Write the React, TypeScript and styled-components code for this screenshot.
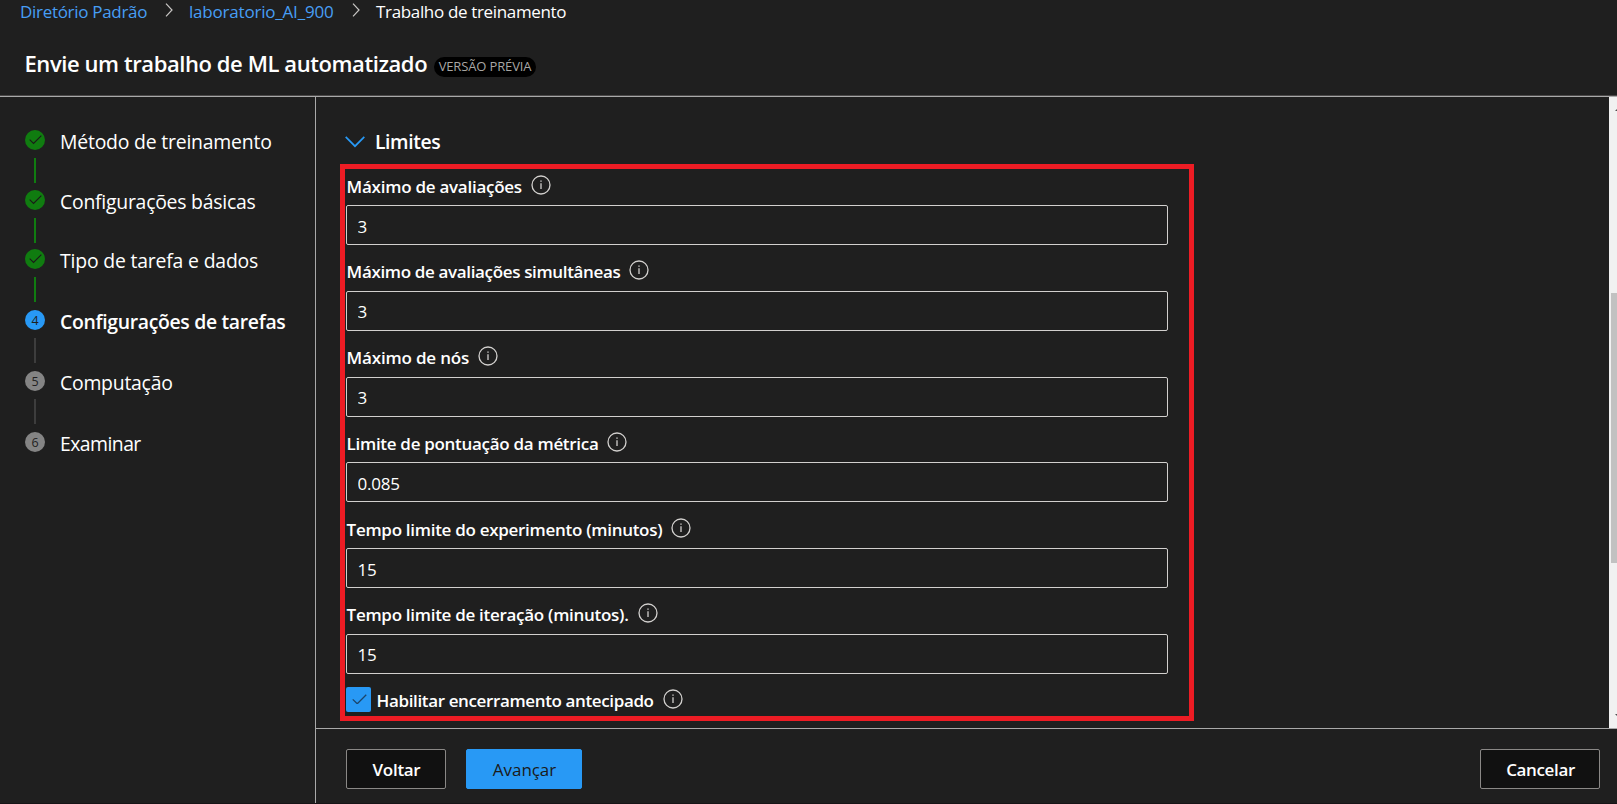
import React from "react";
import styled, { createGlobalStyle } from "styled-components";

const GlobalStyle = createGlobalStyle`
  *, *::before, *::after { box-sizing: border-box; }
  body {
    margin: 0;
    background: #1f1f1f;
    color: #ffffff;
    font-family: "Open Sans", "Noto Sans", sans-serif;
    overflow: hidden;
  }
`;

const Page = styled.div`
  display: flex;
  flex-direction: column;
  height: 100vh;
  border-bottom: 1px solid #171417;
`;

const Header = styled.header`
  flex: none;
  height: 97px;
  border-bottom: 1px solid #a9a9a9;
  box-shadow: inset 0 -1px 0 #4a4848;
`;

const Breadcrumb = styled.nav`
  display: flex;
  height: 22px;
  padding-left: 20px;
  font-size: 17px;
  line-height: 23px;
  white-space: nowrap;
`;

const Crumb = styled.span<{ $width: number; $tracking: number; $current?: boolean }>`
  width: ${(p) => p.$width}px;
  letter-spacing: ${(p) => p.$tracking}px;
  color: ${(p) => (p.$current ? "#ffffff" : "#479ef5")};
`;

const CrumbArrow = styled.svg`
  flex: none;
  width: 8px;
  height: 14px;
  margin: 3px 16px 0;
`;

const TitleRow = styled.div`
  display: flex;
  align-items: flex-start;
  margin-top: 26px;
  padding-left: 24.5px;
`;

const Title = styled.h1`
  width: 409px;
  margin: 0;
  font-size: 22px;
  font-weight: 600;
  line-height: 31px;
  letter-spacing: -0.42px;
  white-space: nowrap;
`;

const PreviewTag = styled.span`
  width: 102px;
  height: 20px;
  margin-top: 9px;
  padding-left: 1px;
  border-radius: 10px;
  background: #000000;
  color: #a8a6a4;
  font-size: 13px;
  line-height: 19px;
  letter-spacing: -0.14px;
  text-align: center;
  white-space: nowrap;
`;

const Body = styled.div`
  display: flex;
  flex: 1;
  min-height: 0;
`;

const Sidebar = styled.aside`
  flex: none;
  width: 316px;
  padding: 33px 0 0 25px;
  border-right: 1px solid #a9a9a9;
`;

const Step = styled.div<{ $height: number }>`
  display: flex;
  gap: 15px;
  height: ${(p) => p.$height}px;
`;

const StepRail = styled.div`
  display: flex;
  flex-direction: column;
  align-items: center;
  gap: 8px;
  width: 20px;
`;

type StepState = "done" | "current" | "pending";

const stepColors: Record<StepState, string> = {
  done: "#107c10",
  current: "#2899f5",
  pending: "#848484",
};

const StepBadge = styled.div<{ $state: StepState }>`
  display: flex;
  flex: none;
  align-items: center;
  justify-content: center;
  width: 20px;
  height: 20px;
  border-radius: 50%;
  background: ${(p) => stepColors[p.$state]};
  color: #1f1f1f;
  font-size: 12.5px;
  line-height: 20px;
`;

const StepNumber = styled.span`
  padding-top: 1px;
`;

const Connector = styled.div<{ $done: boolean }>`
  width: 2px;
  height: 25px;
  background: ${(p) => (p.$done ? "#107c10" : "#3d3d3d")};
`;

const StepLabel = styled.span<{ $active: boolean; $tracking: number }>`
  font-size: 19.4px;
  font-weight: ${(p) => (p.$active ? 600 : 400)};
  line-height: 24px;
  letter-spacing: ${(p) => p.$tracking}px;
  white-space: nowrap;
`;

const Main = styled.main`
  display: flex;
  flex: 1;
  flex-direction: column;
  min-width: 0;
`;

const ScrollArea = styled.div`
  display: flex;
  flex: none;
  height: 631px;
`;

const Content = styled.div`
  flex: 1;
  padding: 31px 0 0 24px;
`;

const SectionHeader = styled.div`
  display: flex;
  align-items: center;
  gap: 10px;
  height: 28px;
  margin-bottom: 8px;
  padding-left: 5px;
`;

const SectionTitle = styled.h2`
  margin: 0;
  font-size: 19.4px;
  font-weight: 600;
  line-height: 28px;
  letter-spacing: -0.42px;
`;

const Highlight = styled.section`
  width: 854px;
  height: 557px;
  border: 5px solid #ed1c24;
  padding-left: 1px;
`;

const Field = styled.div`
  height: 85.75px;
`;

const LabelRow = styled.div`
  display: flex;
  align-items: center;
  gap: 9px;
  height: 36px;
  padding: 0 0 1px 0.6px;
`;

const Label = styled.label<{ $tracking: number }>`
  font-size: 17px;
  font-weight: 600;
  line-height: 24px;
  letter-spacing: ${(p) => p.$tracking}px;
  white-space: nowrap;
`;

const InfoSvg = styled.svg`
  flex: none;
  width: 20px;
  height: 20px;
  margin-bottom: 4px;
`;

const Input = styled.input`
  display: block;
  width: 822px;
  height: 40px;
  padding: 2px 10px 0 10.5px;
  border: 1px solid #d2d0ce;
  border-radius: 2px;
  outline: none;
  background: transparent;
  color: #ffffff;
  font: 400 17px "Open Sans", sans-serif;
  letter-spacing: -0.25px;
`;

const CheckRow = styled.div`
  display: flex;
  align-items: center;
  height: 25px;
  margin-top: 3.5px;
  gap: 5px;
`;

const Checkbox = styled.span`
  display: flex;
  align-items: center;
  justify-content: center;
  width: 25px;
  height: 25px;
  padding-bottom: 1px;
  padding-left: 1px;
  border-radius: 2px;
  background: #2899f5;
`;

const CheckLabel = styled(LabelRow)`
  height: 25px;
  padding: 2px 0 0 0.6px;
`;

const Scrollbar = styled.div`
  display: flex;
  flex: none;
  flex-direction: column;
  align-items: flex-end;
  width: 8px;
  padding: 12px 0 12px;
  background: #f1f1f1;
`;

const ScrollArrow = styled.svg`
  flex: none;
  width: 2px;
  height: 2px;
`;

const ScrollTrack = styled.div`
  flex: 1;
  width: 6px;
  padding-top: 182px;
`;

const ScrollThumb = styled.div`
  height: 270px;
  background: #c1c1c1;
`;

const Footer = styled.footer`
  display: flex;
  flex: 1;
  align-items: flex-start;
  gap: 20px;
  padding: 20px 17px 0 30px;
  border-top: 1px solid #a9a9a9;
`;

const Button = styled.button<{ $width: number; $primary?: boolean; $tracking: number; $end?: boolean }>`
  width: ${(p) => p.$width}px;
  height: 40px;
  margin-left: ${(p) => (p.$end ? "auto" : "0")};
  padding: 1px 0 0 1px;
  border: 1px solid ${(p) => (p.$primary ? "#2899f5" : "#8a8886")};
  border-radius: 2px;
  background: ${(p) => (p.$primary ? "#2899f5" : "#111111")};
  color: ${(p) => (p.$primary ? "#1b1a19" : "#ffffff")};
  font: ${(p) => (p.$primary ? 400 : 600)} 17px "Open Sans", sans-serif;
  letter-spacing: ${(p) => p.$tracking}px;
`;

const steps: { label: string; state: StepState; height: number; tracking: number }[] = [
  { label: "Método de treinamento", state: "done", height: 60, tracking: -0.2 },
  { label: "Configurações básicas", state: "done", height: 59, tracking: -0.24 },
  { label: "Tipo de tarefa e dados", state: "done", height: 61, tracking: -0.18 },
  { label: "Configurações de tarefas", state: "current", height: 61, tracking: -0.32 },
  { label: "Computação", state: "pending", height: 61, tracking: -0.24 },
  { label: "Examinar", state: "pending", height: 20, tracking: -0.55 },
];

const fields = [
  { id: "max-trials", label: "Máximo de avaliações", value: "3", tracking: -0.26 },
  { id: "max-concurrent", label: "Máximo de avaliações simultâneas", value: "3", tracking: -0.35 },
  { id: "max-nodes", label: "Máximo de nós", value: "3", tracking: -0.19 },
  { id: "score", label: "Limite de pontuação da métrica", value: "0.085", tracking: -0.3 },
  { id: "experiment-timeout", label: "Tempo limite do experimento (minutos)", value: "15", tracking: -0.29 },
  { id: "iteration-timeout", label: "Tempo limite de iteração (minutos).", value: "15", tracking: -0.29 },
];

const Chevron = () => (
  <CrumbArrow viewBox="0 0 8 14" fill="none" stroke="#c8c6c4" strokeWidth="1.2">
    <path d="M1 0.7 L7 7 L1 13.3" />
  </CrumbArrow>
);

const InfoIcon = () => (
  <InfoSvg viewBox="0 0 20 20" fill="none" stroke="#d2d0ce">
    <circle cx="10" cy="10" r="9" strokeWidth="1.3" />
    <path d="M10 8.2 V14" strokeWidth="1.3" />
    <path d="M10 5.4 V6.8" strokeWidth="1.4" />
  </InfoSvg>
);

const CheckMark = ({ width, color }: { width: number; color: string }) => (
  <svg width={width} height={width * 0.72} viewBox="0 0 14 10" fill="none" stroke={color} strokeWidth="1.2">
    <path d="M0.7 5 L4.9 9.1 L13.3 0.7" />
  </svg>
);

export default function App() {
  return (
    <Page>
      <GlobalStyle />
      <Header>
        <Breadcrumb>
          <Crumb $width={129} $tracking={-0.3}>Diretório Padrão</Crumb>
          <Chevron />
          <Crumb $width={147} $tracking={-0.2}>laboratorio_AI_900</Crumb>
          <Chevron />
          <Crumb $width={200} $tracking={-0.34} $current>Trabalho de treinamento</Crumb>
        </Breadcrumb>
        <TitleRow>
          <Title>Envie um trabalho de ML automatizado</Title>
          <PreviewTag>VERSÃO PRÉVIA</PreviewTag>
        </TitleRow>
      </Header>
      <Body>
        <Sidebar>
          {steps.map((step, i) => (
            <Step key={step.label} $height={step.height}>
              <StepRail>
                <StepBadge $state={step.state}>
                  {step.state === "done" ? <CheckMark width={13} color="#1b1a19" /> : <StepNumber>{i + 1}</StepNumber>}
                </StepBadge>
                {i < steps.length - 1 && <Connector $done={step.state === "done"} />}
              </StepRail>
              <StepLabel $active={step.state === "current"} $tracking={step.tracking}>
                {step.label}
              </StepLabel>
            </Step>
          ))}
        </Sidebar>
        <Main>
          <ScrollArea>
            <Content>
              <SectionHeader>
                <svg width="20" height="12" viewBox="0 0 20 12" fill="none" stroke="#2899f5" strokeWidth="1.7">
                  <path d="M0.7 0.9 L10 10.2 L19.3 0.9" />
                </svg>
                <SectionTitle>Limites</SectionTitle>
              </SectionHeader>
              <Highlight>
                {fields.map((field) => (
                  <Field key={field.id}>
                    <LabelRow>
                      <Label htmlFor={field.id} $tracking={field.tracking}>{field.label}</Label>
                      <InfoIcon />
                    </LabelRow>
                    <Input id={field.id} defaultValue={field.value} />
                  </Field>
                ))}
                <CheckRow>
                  <Checkbox>
                    <CheckMark width={15} color="#1c4469" />
                  </Checkbox>
                  <CheckLabel>
                    <Label $tracking={-0.37}>Habilitar encerramento antecipado</Label>
                    <InfoIcon />
                  </CheckLabel>
                </CheckRow>
              </Highlight>
            </Content>
            <Scrollbar>
              <ScrollArrow viewBox="0 0 2 2"><path d="M2 0 V2 H0 Z" fill="#505050" /></ScrollArrow>
              <ScrollTrack><ScrollThumb /></ScrollTrack>
              <ScrollArrow viewBox="0 0 2 2"><path d="M0 0 H2 V2 Z" fill="#505050" /></ScrollArrow>
            </Scrollbar>
          </ScrollArea>
          <Footer>
            <Button $width={100} $tracking={-0.3}>Voltar</Button>
            <Button $width={116} $tracking={-0.05} $primary>Avançar</Button>
            <Button $width={120} $tracking={-0.36} $end>Cancelar</Button>
          </Footer>
        </Main>
      </Body>
    </Page>
  );
}
